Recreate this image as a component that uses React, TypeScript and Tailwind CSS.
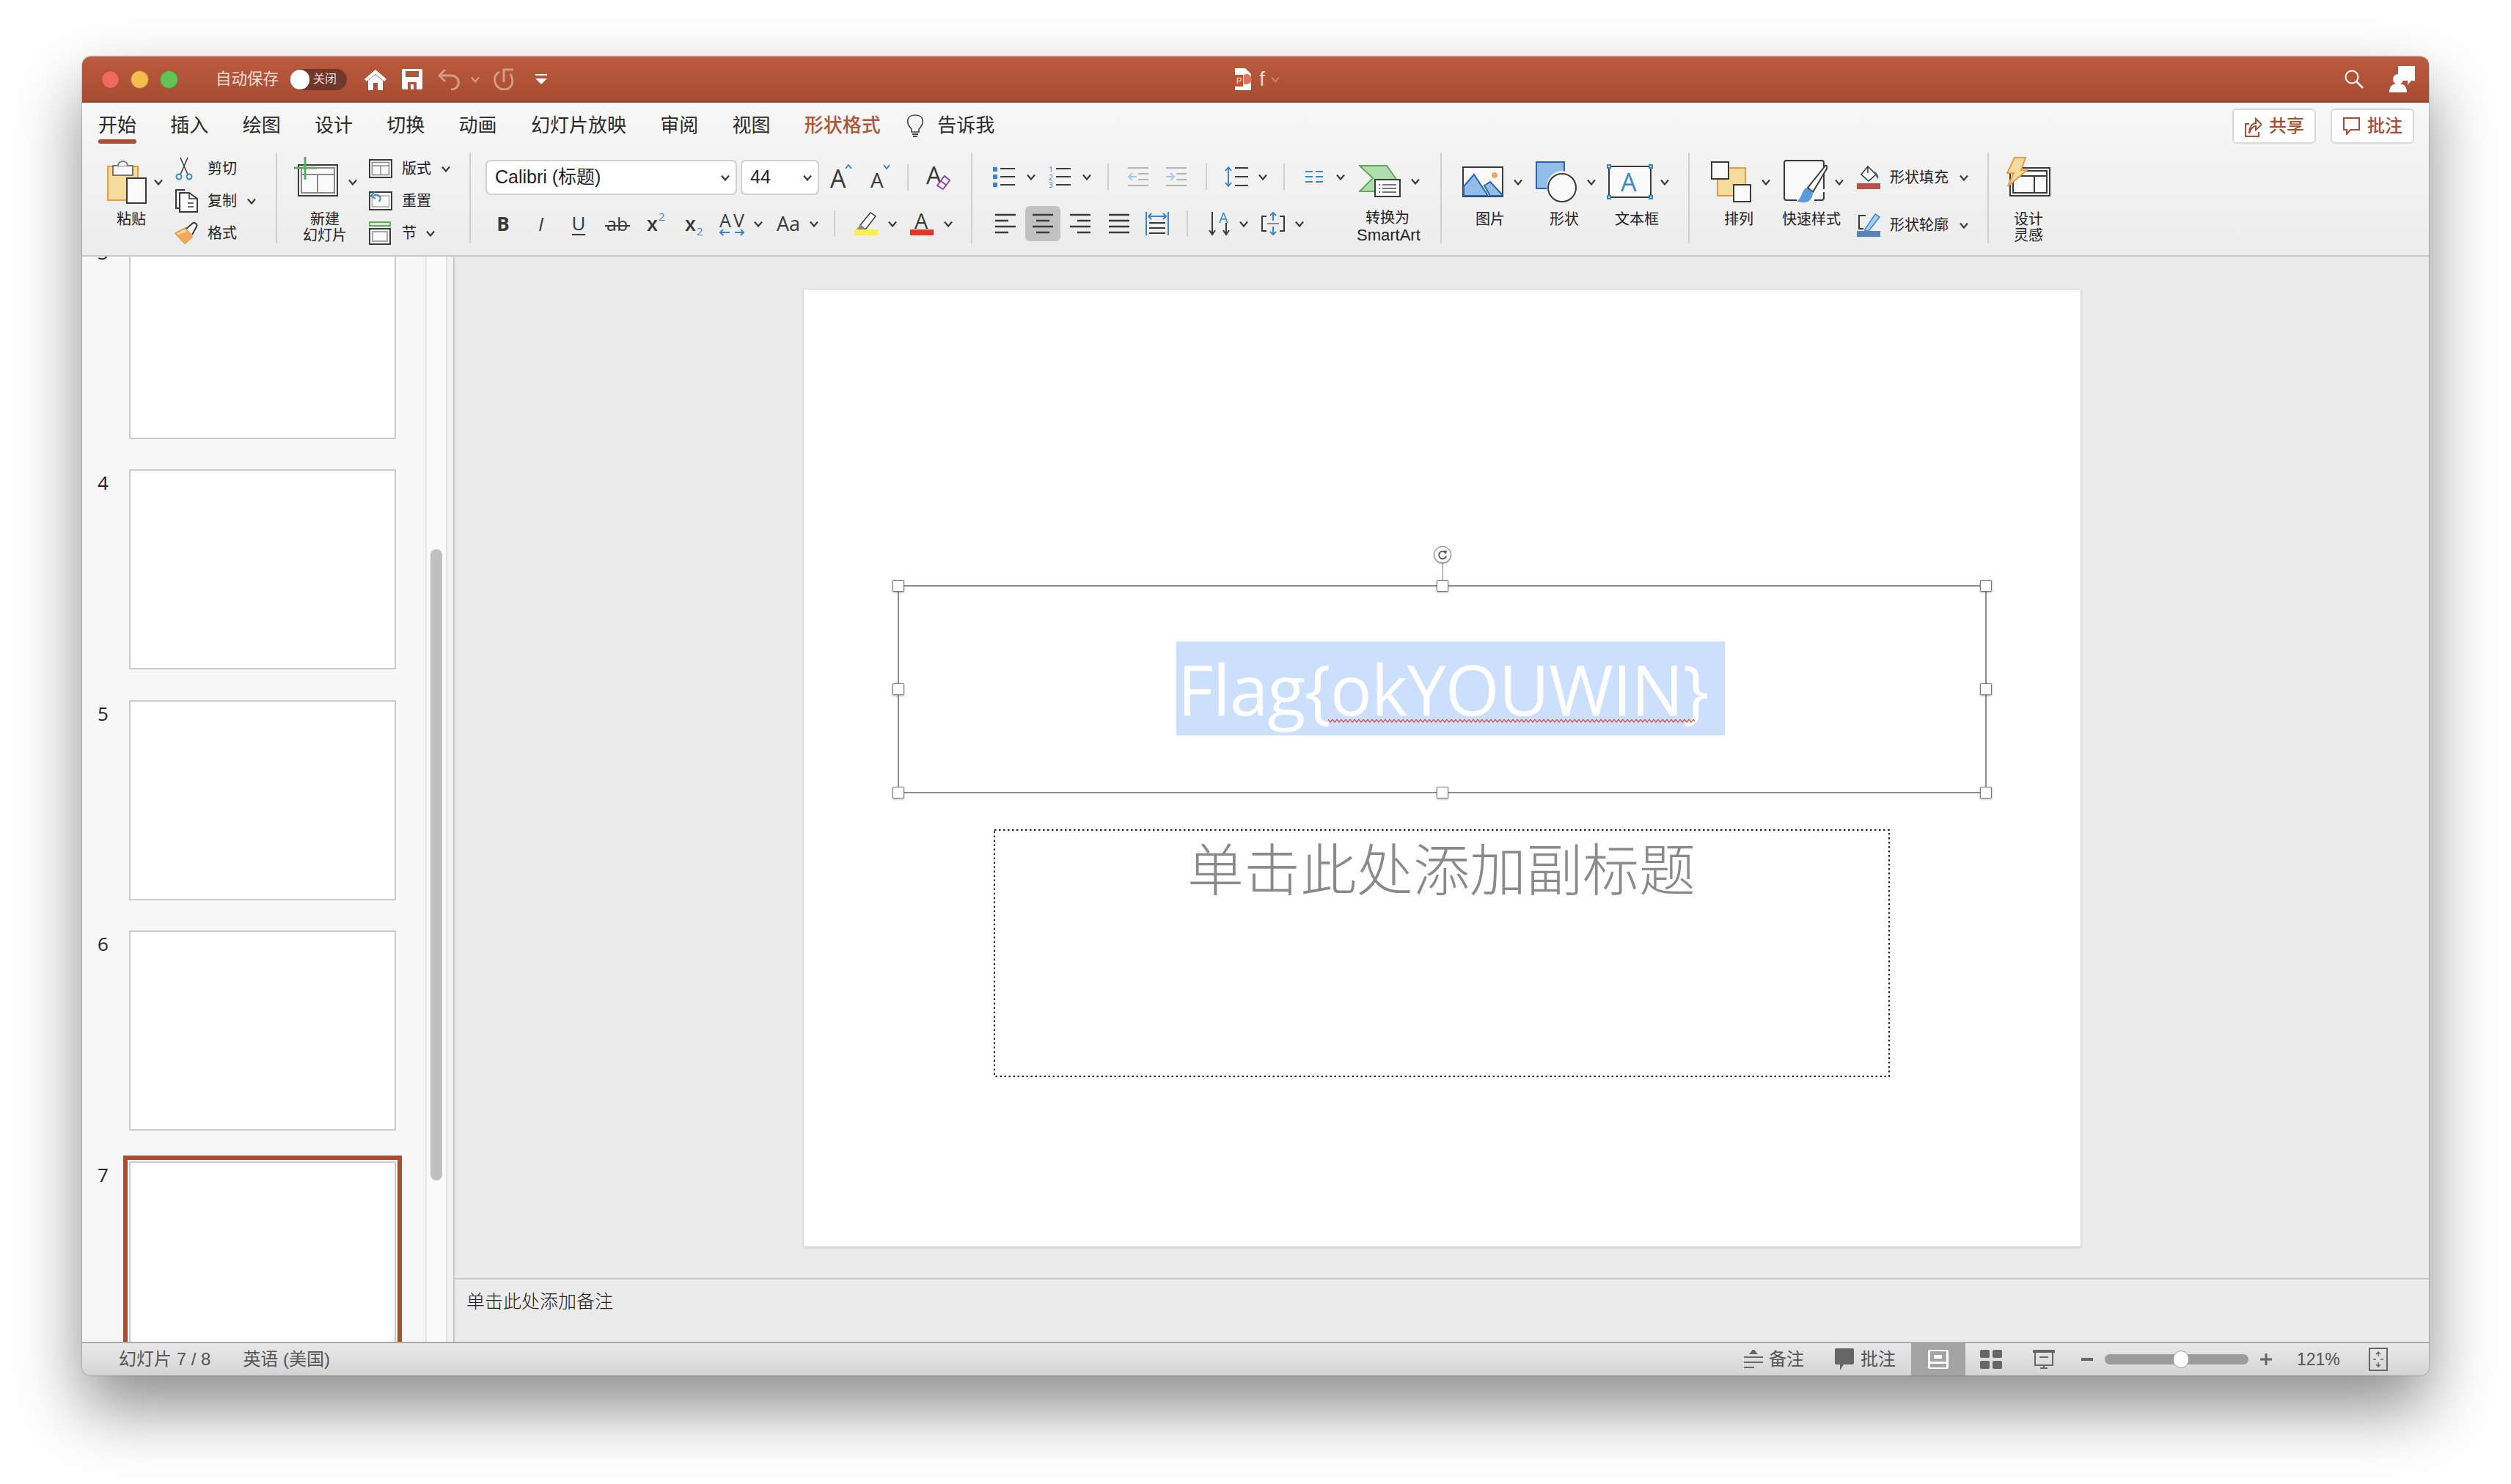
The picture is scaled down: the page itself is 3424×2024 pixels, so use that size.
import React from "react";

const D = "#3a3a3a";
const B = "#3b86c8";
const LB = "#93bde8";
const O = "#e8994a";
const Y = "#f5dc9c";
const W = "#fafafa";

function Chev({ className = "", color = "#3c3c3c" }: { className?: string; color?: string }) {
  return (
    <svg viewBox="0 0 12 9" className={"w-[12px] h-[9px] shrink-0 " + className}>
      <path d="M1 1.5 L6 7.5 L11 1.5" fill="none" stroke={color} strokeWidth="2.2" />
    </svg>
  );
}

function Paste() {
  return (
    <svg viewBox="0 0 54 60" className="w-[54px] h-[60px] shrink-0">
      <rect x="1" y="9" width="41" height="46" fill={Y} stroke={O} strokeWidth="2" />
      <rect x="8" y="8" width="27" height="13" fill={W} stroke="#777" strokeWidth="2" />
      <path d="M15 8 C15 0 28 0 28 8" fill={W} stroke="#777" strokeWidth="2" />
      <rect x="27" y="25" width="26" height="34" fill={W} stroke={D} strokeWidth="2" />
    </svg>
  );
}
function Scissors() {
  return (
    <svg viewBox="0 0 26 32" className="w-[26px] h-[32px] shrink-0">
      <path d="M8 1 L18 24 M18 1 L8 24" stroke={D} strokeWidth="1.5" fill="none" />
      <circle cx="6" cy="27" r="3.5" fill="none" stroke={B} strokeWidth="2" />
      <circle cx="20" cy="27" r="3.5" fill="none" stroke={B} strokeWidth="2" />
    </svg>
  );
}
function Copy() {
  return (
    <svg viewBox="0 0 32 32" className="w-[32px] h-[32px] shrink-0">
      <path d="M10 26 H2 V1 H14" fill="none" stroke={D} strokeWidth="2" />
      <path d="M7 5 H20 L31 13 V31 H7 Z" fill={W} stroke={D} strokeWidth="2" />
      <path d="M20 5 V13 H31 M18 19 H26 M18 24 H26" fill="none" stroke={D} strokeWidth="1.5" />
    </svg>
  );
}
function Format() {
  return (
    <svg viewBox="0 0 32 30" className="w-[32px] h-[30px] shrink-0">
      <path d="M1 15 L14 29 L24 20 L15 8 Z" fill={Y} stroke={O} strokeWidth="2" />
      <path d="M3 18 L17 13 L24 20 L14 29 Z" fill="#f0a860" />
      <path d="M16 9 L24 2 C27 -1 32 3 30 6 L24 17" fill={W} stroke={D} strokeWidth="2" />
    </svg>
  );
}
function NewSlide() {
  return (
    <svg viewBox="0 0 60 54" className="w-[60px] h-[54px] shrink-0 -mt-[14px]">
      <rect x="6" y="11" width="53" height="42" fill={W} stroke={D} strokeWidth="2" />
      <rect x="10" y="15" width="45" height="34" fill="none" stroke="#8a8a8a" strokeWidth="2" />
      <path d="M10 24 H55 M32 24 V49" stroke="#8a8a8a" strokeWidth="2" />
      <path d="M15 0 V31 M0 15 H31" stroke="#5cac5f" strokeWidth="3" />
    </svg>
  );
}
function LayoutIcon() {
  return (
    <svg viewBox="0 0 32 26" className="w-[32px] h-[26px] shrink-0">
      <rect x="1" y="1" width="30" height="24" fill={W} stroke={D} strokeWidth="2" />
      <rect x="4.5" y="4.5" width="23" height="17" fill="none" stroke="#8a8a8a" strokeWidth="1.5" />
      <path d="M4.5 9 H27.5 M16 9 V21" stroke="#8a8a8a" strokeWidth="1.5" />
    </svg>
  );
}
function ResetIcon() {
  return (
    <svg viewBox="0 0 32 26" className="w-[32px] h-[26px] shrink-0">
      <rect x="1" y="1" width="30" height="24" fill={W} stroke={D} strokeWidth="2" />
      <rect x="4.5" y="6" width="23" height="15" fill="none" stroke="#aaa" strokeWidth="1.5" />
      <path d="M14 14 C18 8 14 4 7 5 M8 1 L3 6 L9 10" fill="none" stroke={B} strokeWidth="2" />
    </svg>
  );
}
function SectionIcon() {
  return (
    <svg viewBox="0 0 30 32" className="w-[30px] h-[32px] shrink-0">
      <rect x="1" y="1" width="28" height="5" fill="#d9ebd9" stroke="#5cac5f" strokeWidth="2" />
      <rect x="1" y="10" width="28" height="21" fill={W} stroke={D} strokeWidth="2" />
      <rect x="5" y="14" width="20" height="13" fill="none" stroke="#8a8a8a" strokeWidth="1.5" />
    </svg>
  );
}
function ALetter({ size = 36, w = 30, h = 40, caret }: { size?: number; w?: number; h?: number; caret?: "up" | "down" }) {
  return (
    <svg viewBox={`0 0 ${w} ${h}`} className="shrink-0 overflow-visible" width={w} height={h}>
      <text x="0" y={h - 6} fontSize={size} fontFamily="Open Sans" fill={D}>A</text>
      {caret === "up" && <path d={`M${w - 9} 8 L${w - 5} 3 L${w - 1} 8`} fill="none" stroke={B} strokeWidth="2" />}
      {caret === "down" && <path d={`M${w - 9} 3 L${w - 5} 8 L${w - 1} 3`} fill="none" stroke={B} strokeWidth="2" />}
    </svg>
  );
}
function ClearA() {
  return (
    <svg viewBox="0 0 34 34" className="w-[34px] h-[34px] shrink-0 overflow-visible">
      <text x="0" y="26" fontSize="33" fontFamily="Open Sans" fill={D}>A</text>
      <path d="M15 28 L25 15 L32 21 L23 33 Z" fill={W} stroke="#8f46b0" strokeWidth="2" />
      <path d="M20 22 L27 27" stroke="#8f46b0" strokeWidth="2" />
    </svg>
  );
}
function Strike() {
  return (
    <svg viewBox="0 0 34 28" className="w-[34px] h-[28px] overflow-visible">
      <text x="2" y="24" fontSize="25" fontFamily="Open Sans" fill={D}>ab</text>
      <path d="M0 17 H34" stroke={D} strokeWidth="2" />
    </svg>
  );
}
function Super({ sub }: { sub?: boolean }) {
  return (
    <svg viewBox="0 0 30 34" className="w-[30px] h-[34px] overflow-visible">
      <text x="2" y="27" fontSize="27" fontWeight="600" fontFamily="Open Sans" fill={D}>x</text>
      <text x="18" y={sub ? 33 : 13} fontSize="15" fontFamily="Open Sans" fill={B}>2</text>
    </svg>
  );
}
function Spacing() {
  return (
    <svg viewBox="0 0 34 32" className="w-[34px] h-[32px] overflow-visible">
      <text x="0" y="21" fontSize="25" fontFamily="Open Sans" fill={D} textLength="34">AV</text>
      <path d="M1 28 H14 M5 24 L1 28 L5 32 M21 28 H33 M29 24 L33 28 L29 32" fill="none" stroke={B} strokeWidth="2" />
    </svg>
  );
}
function Highlight() {
  return (
    <svg viewBox="0 0 32 32" className="w-[32px] h-[32px]">
      <path d="M8 18 L22 1 L29 6 L15 24 Z" fill={W} stroke={D} strokeWidth="1.5" />
      <path d="M3 24 L8 17 L15 24 Z" fill="#8a8a8a" />
      <rect x="0" y="24" width="32" height="8" fill="#f8f14a" />
    </svg>
  );
}
function FontColor() {
  return (
    <svg viewBox="0 0 32 32" className="w-[32px] h-[32px] overflow-visible">
      <text x="6" y="23" fontSize="29" fontFamily="Open Sans" fill={D}>A</text>
      <rect x="0" y="24" width="32" height="8" fill="#e93323" />
    </svg>
  );
}
function Bullets({ numbered }: { numbered?: boolean }) {
  return (
    <svg viewBox="0 0 30 30" className="w-[30px] h-[30px] shrink-0 overflow-visible">
      {numbered ? (
        <>
          <text x="0" y="9" fontSize="10" fontFamily="Open Sans" fill={B}>1</text>
          <text x="0" y="20" fontSize="10" fontFamily="Open Sans" fill={B}>2</text>
          <text x="0" y="30" fontSize="10" fontFamily="Open Sans" fill={B}>3</text>
        </>
      ) : (
        <>
          <rect x="0" y="2" width="6" height="6" fill={B} />
          <rect x="0" y="12" width="6" height="6" fill={B} />
          <rect x="0" y="23" width="6" height="6" fill={B} />
        </>
      )}
      <path d="M10 4 H30 M10 15 H30 M10 26 H30" stroke={D} strokeWidth="2" />
    </svg>
  );
}
function Indent({ right }: { right?: boolean }) {
  return (
    <svg viewBox="0 0 28 28" className="w-[28px] h-[28px] shrink-0">
      <path d="M0 2 H28 M14 10 H28 M14 18 H28 M0 26 H28" stroke="#b5b5b5" strokeWidth="2" />
      {right ? (
        <path d="M0 14 H11 M6 9 L11 14 L6 19" fill="none" stroke="#a9c9e8" strokeWidth="2" />
      ) : (
        <path d="M12 14 H1 M6 9 L1 14 L6 19" fill="none" stroke="#a9c9e8" strokeWidth="2" />
      )}
    </svg>
  );
}
function LineSpace() {
  return (
    <svg viewBox="0 0 32 30" className="w-[32px] h-[30px] shrink-0">
      <path d="M5 2 V28 M1 7 L5 2 L9 7 M1 23 L5 28 L9 23" fill="none" stroke={B} strokeWidth="2" />
      <path d="M14 3 H32 M14 15 H32 M14 27 H32" stroke={D} strokeWidth="2" />
    </svg>
  );
}
function Columns() {
  return (
    <svg viewBox="0 0 24 16" className="w-[24px] h-[16px] shrink-0">
      <path d="M0 1 H10 M14 1 H24 M0 8 H10 M14 8 H24 M0 15 H10 M14 15 H24" stroke={B} strokeWidth="2" />
    </svg>
  );
}
function SmartArtIcon() {
  return (
    <svg viewBox="0 0 57 44" className="w-[57px] h-[44px] shrink-0">
      <path d="M1 1 H38 L54 24 L38 36 H1 L19 18 Z" fill="#b0dcae" stroke="#5cac5f" strokeWidth="2" />
      <rect x="22" y="20" width="34" height="23" fill={W} stroke={D} strokeWidth="2" />
      <path d="M27 27 H29 M32 27 H51 M27 32 H29 M32 32 H51 M27 37 H29 M32 37 H51" stroke="#777" strokeWidth="2" />
    </svg>
  );
}
function AlignLines({ kind, color = D }: { kind: "l" | "c" | "r" | "j"; color?: string }) {
  const d =
    kind === "l"
      ? "M0 2 H28 M0 10 H18 M0 18 H28 M0 26 H18"
      : kind === "c"
      ? "M0 2 H28 M5 10 H23 M0 18 H28 M5 26 H23"
      : kind === "r"
      ? "M0 2 H28 M10 10 H28 M0 18 H28 M10 26 H28"
      : "M0 2 H28 M0 10 H28 M0 18 H28 M0 26 H28";
  return (
    <svg viewBox="0 0 28 28" className="w-[28px] h-[28px] shrink-0">
      <path d={d} stroke={color} strokeWidth="2.4" />
    </svg>
  );
}
function Distributed() {
  return (
    <svg viewBox="0 0 32 32" className="w-[32px] h-[32px] shrink-0">
      <path d="M1 0 V32 M31 0 V32" stroke={B} strokeWidth="2" />
      <path d="M4 6 H28 M8 2 L4 6 L8 10 M24 2 L28 6 L24 10" fill="none" stroke={B} strokeWidth="2" />
      <path d="M5 15 H27 M5 22 H27 M5 29 H27" stroke={D} strokeWidth="2" />
    </svg>
  );
}
function TextDir() {
  return (
    <svg viewBox="0 0 30 32" className="w-[30px] h-[32px] shrink-0 overflow-visible">
      <path d="M5 0 V30 M1 25 L5 31 L9 25" fill="none" stroke={D} strokeWidth="2" />
      <path d="M24 15 V30 M20 25 L24 31 L28 25" fill="none" stroke={D} strokeWidth="2" />
      <text x="14" y="15" fontSize="20" fontFamily="Open Sans" fill={B}>A</text>
    </svg>
  );
}
function AlignText() {
  return (
    <svg viewBox="0 0 32 32" className="w-[32px] h-[32px] shrink-0">
      <path d="M7 6 H1 V26 H7 M25 6 H31 V26 H25" fill="none" stroke={D} strokeWidth="2" />
      <path d="M16 1 V12 M12 5 L16 1 L20 5 M16 20 V31 M12 27 L16 31 L20 27" fill="none" stroke={B} strokeWidth="2" />
      <path d="M8 16 H24" stroke="#8a8a8a" strokeWidth="2" />
    </svg>
  );
}
function Picture() {
  return (
    <svg viewBox="0 0 56 42" className="w-[56px] h-[42px] shrink-0">
      <rect x="1" y="1" width="54" height="40" fill={W} stroke={D} strokeWidth="2" />
      <path d="M2 27 L16 11 L35 40 H2 Z" fill={LB} stroke="#2a66ad" strokeWidth="2" />
      <path d="M30 26 L38 21 L54 38 V40 H38 Z" fill={LB} stroke="#2a66ad" strokeWidth="2" />
      <ellipse cx="44" cy="12" rx="4" ry="4" fill="#f0a860" />
    </svg>
  );
}
function Shape() {
  return (
    <svg viewBox="0 0 56 56" className="w-[56px] h-[56px] shrink-0">
      <rect x="1" y="1" width="38" height="36" fill={LB} stroke="#2a66ad" strokeWidth="2" />
      <ellipse cx="36" cy="35" rx="21" ry="22" fill="#f3f3f3" />
      <ellipse cx="36" cy="36" rx="19" ry="19" fill={W} stroke={D} strokeWidth="2" />
    </svg>
  );
}
function TextBox() {
  return (
    <svg viewBox="0 0 63 48" className="w-[63px] h-[48px] shrink-0 overflow-visible">
      <rect x="3" y="3" width="57" height="42" fill={W} stroke={D} strokeWidth="2" />
      <text x="19" y="37" fontSize="34" fontFamily="Open Sans" fill={B}>A</text>
      {[[0, 0], [57, 0], [0, 42], [57, 42]].map(([x, y], i) => (
        <rect key={i} x={x + 1} y={y + 1} width="4" height="4" fill="#fff" stroke={B} strokeWidth="2" />
      ))}
    </svg>
  );
}
function Arrange() {
  return (
    <svg viewBox="0 0 55 56" className="w-[55px] h-[56px] shrink-0">
      <rect x="9" y="9" width="38" height="38" fill={Y} stroke={O} strokeWidth="2" />
      <rect x="1" y="1" width="23" height="23" fill={W} stroke={D} strokeWidth="2" />
      <rect x="31" y="32" width="23" height="23" fill={W} stroke={D} strokeWidth="2" />
    </svg>
  );
}
function QuickStyle() {
  return (
    <svg viewBox="0 0 60 60" className="w-[60px] h-[60px] shrink-0">
      <path d="M1 4 H55 V45 L40 55 H1 Z" fill={W} />
      <path d="M18 55 H4 Q1 55 1 52 V4 Q1 1 4 1 H52 Q55 1 55 4 V40 M55 44 V52 Q55 55 52 55 H42" fill="none" stroke={D} strokeWidth="2" />
      <path d="M33 38 L57 8 Q60 7 59 12 L40 44 Z" fill={W} stroke={D} strokeWidth="2" />
      <path d="M31 38 C24 42 26 52 18 56 C28 61 40 58 40 44 Z" fill="#5c9bd8" />
    </svg>
  );
}
function Fill() {
  return (
    <svg viewBox="0 0 32 32" className="w-[32px] h-[32px] shrink-0">
      <path d="M15 1 L26 12 L16 21 L6 12 Z M15 1 V10" fill={W} stroke={D} strokeWidth="1.6" />
      <path d="M24 8 C28 10 30 14 29 18 C26 16 25 12 24 8 Z" fill="#2a66ad" />
      <rect x="0" y="24" width="32" height="8" fill="#b7504a" />
    </svg>
  );
}
function Outline() {
  return (
    <svg viewBox="0 0 32 32" className="w-[32px] h-[32px] shrink-0">
      <path d="M12 3 H3 V21 H9" fill="none" stroke={D} strokeWidth="2" />
      <path d="M11 22 L25 1 L31 5 L16 24 L11 24 Z" fill="#a9cdf0" stroke={B} strokeWidth="1.5" />
      <rect x="0" y="24" width="32" height="8" fill="#5a82bd" />
    </svg>
  );
}
function Design() {
  return (
    <svg viewBox="0 0 60 54" className="w-[60px] h-[54px] shrink-0 -mt-[14px]">
      <rect x="5" y="15" width="54" height="38" fill={W} stroke={D} strokeWidth="2" />
      <rect x="9" y="19" width="46" height="30" fill="none" stroke={D} strokeWidth="2" />
      <path d="M9 26 H55 M38 26 V49" stroke={D} strokeWidth="2" />
      <path d="M11 1 H26 L20 18 H28 L2 40 L10 22 H1 Z" fill={Y} stroke={O} strokeWidth="2" />
    </svg>
  );
}

function Large({
  col,
  row,
  icon,
  chev,
  lines,
}: {
  col: string;
  row?: string;
  icon: React.ReactNode;
  chev?: string;
  lines: string[];
}) {
  return (
    <div className={"flex flex-col shrink-0 " + col}>
      <div className={"flex items-center h-[80px] " + (row ?? "")}>
        {icon}
        {chev && <Chev className={chev} />}
      </div>
      {lines.map((l) => (
        <div
          key={l}
          className={
            "leading-[22px] text-center whitespace-nowrap text-[#222] " + (l === "SmartArt" ? "text-[22px] mt-[2px] -ml-[2px]" : "text-[20px]")
          }
        >
          {l}
        </div>
      ))}
    </div>
  );
}
function Small({ icon, label, chev, box = "w-[45px]", cls = "" }: { icon: React.ReactNode; label: string; chev?: string; box?: string; cls?: string }) {
  return (
    <div className={"flex items-center h-[44px] shrink-0 whitespace-nowrap " + cls}>
      <div className={"shrink-0 flex items-center " + box}>{icon}</div>
      <span className="text-[20px] text-[#222]">{label}</span>
      {chev && <Chev className={chev} />}
    </div>
  );
}
function Cell({ cls, children }: { cls: string; children?: React.ReactNode }) {
  return <div className={"flex items-center justify-center shrink-0 h-[48px] " + cls}>{children}</div>;
}
function Sep({ cls }: { cls: string }) {
  return <div className={"w-[2px] h-[36px] bg-[#cfcfcf] shrink-0 " + cls} />;
}

const tabs = ["开始", "插入", "绘图", "设计", "切换", "动画", "幻灯片放映", "审阅", "视图"];

function Handle({ cls }: { cls: string }) {
  return (
    <div className={"absolute w-[16px] h-[16px] bg-white border border-[#777] rounded-[1px] shadow-[0_1px_3px_rgba(0,0,0,0.35)] " + cls} />
  );
}

function Thumb({ n, active }: { n: number; active?: boolean }) {
  return (
    <div className="flex h-[314.4px] shrink-0 pl-[21px]">
      <div className="w-[43px] text-[26px] leading-[36px] text-[#222] font-['Open_Sans',sans-serif]">{n}</div>
      <div
        className={
          "w-[364px] h-[273px] bg-white border-2 border-[#cbcbcb] " +
          (active ? "shadow-[0_0_0_2px_#ffffff,0_0_0_8px_#a94e33]" : "")
        }
      />
    </div>
  );
}

export default function App() {
  return (
    <div className="w-[3424px] h-[2024px] bg-white pt-[77px] pl-[112px] overflow-hidden font-['Liberation_Sans','Noto_Sans_CJK_SC',sans-serif]">
      <div className="w-[3200px] h-[1799px] flex flex-col rounded-[12px] overflow-hidden bg-[#ebebeb] shadow-[0_44px_90px_rgba(0,0,0,0.45),0_0_2px_rgba(0,0,0,0.5)]">
        {/* Title bar */}
        <div className="h-[63px] shrink-0 flex items-center bg-gradient-to-b from-[#bc5b3f] to-[#a64c32] border-b-2 border-[#963f28] pt-[1px]">
          <div className="flex-1 flex items-center">
            <div className="w-[25px] h-[25px] rounded-full bg-[#ee6a5f] border border-[#a8442f] ml-[26px]" />
            <div className="w-[25px] h-[25px] rounded-full bg-[#f5bd4f] border border-[#a8762f] ml-[15px]" />
            <div className="w-[25px] h-[25px] rounded-full bg-[#61c454] border border-[#5a8a35] ml-[15px]" />
            <span className="ml-[51px] text-[21.5px] text-[#f3dcd4] whitespace-nowrap">自动保存</span>
            <div className="ml-[16px] w-[77px] h-[29px] rounded-full bg-[#71382a] flex items-center shrink-0">
              <div className="w-[26px] h-[27px] rounded-full bg-white shrink-0" />
              <span className="ml-[5px] text-[16px] text-[#f3dcd4] whitespace-nowrap">关闭</span>
            </div>
            <svg viewBox="0 0 32 30" className="w-[32px] h-[30px] ml-[23px] shrink-0">
              <path d="M16 3 L30 15 L28 17 L16 7 L4 17 L2 15 Z" fill="#fff" stroke="#fff" strokeWidth="1.5" />
              <path d="M6 17 L16 9 L26 17 V30 H19 V20 H13 V30 H6 Z" fill="#fff" />
            </svg>
            <svg viewBox="0 0 28 28" className="w-[28px] h-[28px] ml-[20px] shrink-0">
              <path d="M2 0 H26 Q28 0 28 2 V26 Q28 28 26 28 H2 Q0 28 0 26 V2 Q0 0 2 0 Z" fill="#fff" />
              <rect x="5" y="3" width="18" height="8" fill="#b0553a" />
              <rect x="8" y="18" width="12" height="10" fill="#b0553a" />
              <rect x="12" y="21" width="4" height="7" fill="#fff" />
            </svg>
            <svg viewBox="0 0 31 30" className="w-[31px] h-[30px] ml-[21px] shrink-0">
              <path d="M10 2 L2 10 L10 18 M2 10 H18 C32 10 32 29 18 29" fill="none" stroke="#d69a85" strokeWidth="3" />
            </svg>
            <Chev className="ml-[14px]" color="#d69a85" />
            <svg viewBox="0 0 30 30" className="w-[30px] h-[30px] ml-[18px] shrink-0">
              <path d="M9 5 C-2 10 2 29 15 29 C26 29 30 18 24 8 M15 19 V2 H28" fill="none" stroke="#d69a85" strokeWidth="3" />
            </svg>
            <svg viewBox="0 0 16 14" className="w-[16px] h-[14px] ml-[28px] shrink-0">
              <rect x="0" y="0" width="16" height="2" fill="#fff" />
              <path d="M0 6 H16 L8 14 Z" fill="#fff" />
            </svg>
          </div>
          <div className="flex items-center shrink-0 pl-[24px]">
            <svg viewBox="0 0 22 30" className="w-[22px] h-[30px] overflow-visible">
              <path d="M0 0 H14 L22 8 V30 H0 Z" fill="#fff" />
              <rect x="0" y="9" width="11" height="16" fill="#c8502e" />
              <path d="M12 9 A7 7 0 1 1 12 21 Z" fill="#e0735a" />
              <text x="2" y="21" fontSize="11" fontFamily="Liberation Sans" fill="#fff">P</text>
            </svg>
            <span className="ml-[11px] text-[27px] leading-[30px] text-[#f3dcd4]">f</span>
            <Chev className="ml-[8px]" color="#c98068" />
          </div>
          <div className="flex-1 flex items-center justify-end pr-[19px]">
            <svg viewBox="0 0 26 26" className="w-[26px] h-[26px]">
              <circle cx="10" cy="10" r="8.5" fill="none" stroke="#fff" strokeWidth="2" />
              <path d="M16 16 L25 25" stroke="#fff" strokeWidth="2.5" />
            </svg>
            <svg viewBox="0 0 35 36" className="w-[35px] h-[36px] ml-[35px]">
              <path d="M12 0 H35 V20 H30 L25 26 V20 H12 Z" fill="#fff" />
              <circle cx="12" cy="18" r="7" fill="#fff" />
              <path d="M0 36 C0 26 6 24 12 24 C18 24 24 26 24 36 Z" fill="#fff" />
            </svg>
          </div>
        </div>

        {/* Ribbon */}
        <div className="h-[210px] shrink-0 flex flex-col bg-gradient-to-b from-[#f7f7f7] to-[#ececec] border-b-2 border-[#c9c9c9]">
          <div className="h-[68px] shrink-0 flex items-start">
            <div className="flex items-start pl-[22px] gap-[46.3px] pt-[15px] text-[26px] leading-[32px] text-[#2a2a2a]">
              {tabs.map((t, i) => (
                <div key={t} className="flex flex-col whitespace-nowrap">
                  <span>{t}</span>
                  {i === 0 && <div className="h-[6px] mt-[3px] rounded-full bg-[#a94e33]" />}
                </div>
              ))}
              <span className="text-[#b0553a] font-medium whitespace-nowrap">形状格式</span>
              <div className="flex items-center -ml-[11px] whitespace-nowrap">
                <svg viewBox="0 0 24 32" className="w-[24px] h-[32px] shrink-0">
                  <path d="M7 21 C2 16 1 12 2 8 C4 0 20 0 22 8 C23 12 22 16 17 21 V25 H7 Z" fill="none" stroke="#444" strokeWidth="1.6" />
                  <path d="M8 28 H16 M9 31 H15" stroke="#444" strokeWidth="2" />
                </svg>
                <span className="ml-[18px]">告诉我</span>
              </div>
            </div>
            <div className="ml-auto flex pt-[8px] pr-[20px] gap-[20px]">
              <div className="w-[114px] h-[48px] bg-white border-2 border-[#d8d8d8] rounded-[6px] flex items-center justify-center text-[#a94e33] text-[24px] font-medium">
                <svg viewBox="0 0 24 32" className="w-[24px] h-[32px] mr-[10px]">
                  <path d="M7 13 H2 V30 H20 V24" fill="none" stroke="#a94e33" strokeWidth="2" />
                  <path d="M7 26 C7 16 12 12 16 12 V6 L24 14 L16 21 V16 C12 16 9 20 7 26 Z" fill="none" stroke="#a94e33" strokeWidth="2" />
                </svg>
                共享
              </div>
              <div className="w-[114px] h-[48px] bg-white border-2 border-[#d8d8d8] rounded-[6px] flex items-center justify-center text-[#a94e33] text-[24px] font-medium">
                <svg viewBox="0 0 24 24" className="w-[24px] h-[24px] mr-[10px]">
                  <path d="M2 1 H23 V17 H11 L6 23 V17 H2 Z" fill="none" stroke="#a94e33" strokeWidth="2" />
                </svg>
                批注
              </div>
            </div>
          </div>

          <div className="h-[124px] shrink-0 flex">
            {/* Clipboard */}
            <div className="w-[266px] shrink-0 flex border-r-2 border-[#cfcfcf]">
              <Large col="w-[78px] ml-[28px]" row="pl-[6px]" icon={<Paste />} chev="ml-[10px]" lines={["粘贴"]} />
              <div className="ml-[20px] flex flex-col w-[120px] shrink-0">
                <Small icon={<Scissors />} label="剪切" />
                <Small icon={<Copy />} label="复制" chev="ml-[14px]" />
                <Small icon={<Format />} label="格式" />
              </div>
            </div>
            {/* Slides */}
            <div className="w-[264px] shrink-0 flex border-r-2 border-[#cfcfcf]">
              <Large col="w-[80px] ml-[25px]" row="-ml-[2px]" icon={<NewSlide />} chev="ml-[14px]" lines={["新建", "幻灯片"]} />
              <div className="ml-[20px] flex flex-col w-[120px] shrink-0">
                <Small icon={<LayoutIcon />} label="版式" chev="ml-[14px]" />
                <Small icon={<ResetIcon />} label="重置" />
                <Small icon={<SectionIcon />} label="节" chev="ml-[13px]" />
              </div>
            </div>
            {/* Font */}
            <div className="w-[684px] shrink-0 flex flex-col pt-[10px] border-r-2 border-[#cfcfcf]">
              <div className="flex items-center h-[48px]">
                <div className="ml-[20px] w-[343px] h-[48px] bg-white border-2 border-[#d0d0d0] rounded-[7px] flex items-center pl-[11px] pr-[8px] text-[25px] text-[#222] shrink-0">
                  <span className="whitespace-nowrap">Calibri (标题)</span>
                  <Chev className="ml-auto" />
                </div>
                <div className="ml-[5px] w-[107px] h-[48px] bg-white border-2 border-[#d0d0d0] rounded-[7px] flex items-center pl-[11px] pr-[8px] text-[25px] text-[#222] shrink-0">
                  <span>44</span>
                  <Chev className="ml-auto" />
                </div>
                <div className="ml-[15px] shrink-0"><ALetter w={30} caret="up" size={34} /></div>
                <div className="ml-[25px] shrink-0"><ALetter w={27} caret="down" size={28} /></div>
                <Sep cls="ml-[23px]" />
                <div className="ml-[24px] shrink-0"><ClearA /></div>
              </div>
              <div className="flex items-center h-[48px] mt-[15px] ml-[18px] text-[#3a3a3a] font-['Open_Sans',sans-serif]">
                <Cell cls="w-[52px] text-[26px] font-bold">B</Cell>
                <Cell cls="w-[51px] text-[26px] italic">I</Cell>
                <Cell cls="w-[52px] text-[26px]"><span className="border-b-2 border-[#3a3a3a] leading-[30px]">U</span></Cell>
                <Cell cls="w-[53px]"><Strike /></Cell>
                <Cell cls="w-[53px]"><Super /></Cell>
                <Cell cls="w-[51px]"><Super sub /></Cell>
                <Cell cls="w-[52px]"><Spacing /></Cell>
                <Cell cls="w-[20px]"><Chev /></Cell>
                <Cell cls="w-[62px] text-[27px]">Aa</Cell>
                <Cell cls="w-[8px]"><Chev /></Cell>
                <Sep cls="ml-[23px]" />
                <Cell cls="w-[32px] ml-[26px]"><Highlight /></Cell>
                <Cell cls="w-[12px] ml-[14px]"><Chev /></Cell>
                <Cell cls="w-[32px] ml-[18px]"><FontColor /></Cell>
                <Cell cls="w-[12px] ml-[14px]"><Chev /></Cell>
              </div>
            </div>
            {/* Paragraph */}
            <div className="w-[640px] shrink-0 flex border-r-2 border-[#cfcfcf]">
              <div className="w-[520px] shrink-0 flex flex-col pt-[9px]">
                <div className="flex items-center h-[48px]">
                  <div className="ml-[28px]"><Bullets /></div>
                  <Chev className="ml-[16px]" />
                  <div className="ml-[18px]"><Bullets numbered /></div>
                  <Chev className="ml-[16px]" />
                  <Sep cls="ml-[22px]" />
                  <div className="ml-[26px]"><Indent /></div>
                  <div className="ml-[24px]"><Indent right /></div>
                  <Sep cls="ml-[26px]" />
                  <div className="ml-[24px]"><LineSpace /></div>
                  <Chev className="ml-[14px]" />
                  <Sep cls="ml-[22px]" />
                  <div className="ml-[28px]"><Columns /></div>
                  <Chev className="ml-[18px]" />
                </div>
                <div className="flex items-center h-[48px] mt-[16px]">
                  <div className="ml-[31px] w-[27px]"><AlignLines kind="l" /></div>
                  <div className="ml-[14px] w-[48px] h-[48px] rounded-[6px] bg-[#c1c1c1] flex items-center justify-center shrink-0"><AlignLines kind="c" /></div>
                  <div className="ml-[13px] w-[29px]"><AlignLines kind="r" /></div>
                  <div className="ml-[24px] w-[28px]"><AlignLines kind="j" /></div>
                  <div className="ml-[22px]"><Distributed /></div>
                  <Sep cls="ml-[24px]" />
                  <div className="ml-[28px]"><TextDir /></div>
                  <Chev className="ml-[12px]" />
                  <div className="ml-[18px]"><AlignText /></div>
                  <Chev className="ml-[14px]" />
                </div>
              </div>
              <Large col="w-[80px] ml-[6px]" row="ml-[1px]" icon={<SmartArtIcon />} chev="ml-[14px]" lines={["转换为", "SmartArt"]} />
            </div>
            {/* Insert */}
            <div className="w-[338px] shrink-0 flex border-r-2 border-[#cfcfcf]">
              <Large col="w-[80px] ml-[26px]" row="ml-[2px]" icon={<Picture />} chev="ml-[14px]" lines={["图片"]} />
              <Large col="w-[80px] ml-[21px]" row="ml-[1px]" icon={<Shape />} chev="ml-[14px]" lines={["形状"]} />
              <Large col="w-[80px] ml-[19px]" row="-ml-[1px]" icon={<TextBox />} chev="ml-[10px]" lines={["文本框"]} />
            </div>
            {/* Drawing */}
            <div className="w-[408px] shrink-0 flex border-r-2 border-[#cfcfcf]">
              <Large col="w-[80px] ml-[27px]" row="ml-[2px]" icon={<Arrange />} chev="ml-[14px]" lines={["排列"]} />
              <Large col="w-[80px] ml-[19px]" row="ml-[2px]" icon={<QuickStyle />} chev="ml-[10px]" lines={["快速样式"]} />
              <div className="ml-[22px] flex flex-col pt-[12px] shrink-0">
                <Small icon={<Fill />} label="形状填充" chev="ml-[15px]" />
                <Small icon={<Outline />} label="形状轮廓" chev="ml-[15px]" cls="mt-[21px]" />
              </div>
            </div>
            {/* Designer */}
            <Large col="w-[60px] ml-[24px]" icon={<Design />} lines={["设计", "灵感"]} />
          </div>
        </div>

        {/* Body */}
        <div className="flex-1 min-h-0 flex">
          <div className="w-[470px] shrink-0 bg-[#f7f7f7] border-r-2 border-[#e4e4e4] overflow-hidden">
            <div className="flex flex-col -mt-[24px]">
              <Thumb n={3} />
              <Thumb n={4} />
              <Thumb n={5} />
              <Thumb n={6} />
              <Thumb n={7} active />
            </div>
          </div>
          <div className="w-[28px] shrink-0 bg-[#fafafa] border-r-2 border-[#e4e4e4] pl-[5px]">
            <div className="w-[16px] h-[861px] mt-[399px] rounded-full bg-[#c0c0c0]" />
          </div>
          <div className="w-[10px] shrink-0 bg-[#f1f1f1] border-r-2 border-[#c8c8c8]" />
          <div className="flex-1 min-w-0 flex flex-col">
            <div className="flex-1 min-h-0 pt-[45px]">
              <div className="relative w-[1741px] h-[1305px] mx-auto bg-white shadow-[0_1px_4px_rgba(0,0,0,0.2)]">
                {/* Title placeholder */}
                <div className="absolute left-[128px] top-[403px] w-[1485px] h-[284px] border-2 border-[#8c8c8c]">
                  <div className="absolute left-[378px] top-[75px] w-[748px] h-[128px] bg-[#cce0fd] flex items-center justify-center pr-[20px] text-white text-[95px] leading-[128px] tracking-[-1px] whitespace-nowrap font-['Open_Sans',sans-serif]">
                    Flag{"{"}okYOUWIN{"}"}
                    <svg className="absolute left-[207px] top-[105px] w-[500px] h-[6px]" viewBox="0 0 500 6">
                      <defs>
                        <pattern id="zz" width="6" height="6" patternUnits="userSpaceOnUse">
                          <path d="M0 1 L3 5 L6 1" fill="none" stroke="#e33b2e" strokeWidth="1.2" />
                        </pattern>
                      </defs>
                      <rect width="500" height="6" fill="url(#zz)" />
                    </svg>
                  </div>
                  <Handle cls="-left-[9px] -top-[9px]" />
                  <Handle cls="left-[733px] -top-[9px]" />
                  <Handle cls="-right-[9px] -top-[9px]" />
                  <Handle cls="-left-[9px] top-[132px]" />
                  <Handle cls="-right-[9px] top-[132px]" />
                  <Handle cls="-left-[9px] -bottom-[9px]" />
                  <Handle cls="left-[733px] -bottom-[9px]" />
                  <Handle cls="-right-[9px] -bottom-[9px]" />
                  <div className="absolute left-[741px] -top-[32px] w-[1px] h-[24px] bg-[#777]" />
                  <div className="absolute left-[729px] -top-[55px] w-[24px] h-[23px] rounded-full bg-white border border-[#777] shadow-[0_1px_2px_rgba(0,0,0,0.3)] flex items-center justify-center">
                    <svg viewBox="0 0 14 14" className="w-[14px] h-[14px]">
                      <path d="M10.5 3.5 A5 5 0 1 0 12 8" fill="none" stroke="#555" strokeWidth="1.8" />
                      <path d="M8 1 L13 1 L12 6 Z" fill="#555" />
                    </svg>
                  </div>
                </div>
                {/* Subtitle placeholder */}
                <div className="absolute left-[259px] top-[736px] w-[1222px] h-[338px] pt-[18px] text-center text-[77px] leading-[80px] text-[#8a8a8a] font-light font-['Liberation_Serif','Noto_Sans_CJK_SC',serif]">
                  <svg className="absolute inset-0 w-full h-full" viewBox="0 0 1222 338">
                    <rect x="1" y="1" width="1220" height="336" fill="none" stroke="#222" strokeWidth="2" strokeDasharray="2.5 3.5" />
                  </svg>
                  单击此处添加副标题
                </div>
              </div>
            </div>
            <div className="h-[87px] shrink-0 border-t-2 border-[#c8c8c8] pl-[16px] flex items-center pb-[24px] text-[25px] text-[#222] font-light">
              单击此处添加备注
            </div>
          </div>
        </div>

        {/* Status bar */}
        <div className="h-[46px] shrink-0 relative flex items-center bg-gradient-to-b from-[#e9e9e9] to-[#d4d4d4] border-t-2 border-[#a8a8a8] pl-[50px] pr-[56px] text-[24px] text-[#555] whitespace-nowrap">
          <span>幻灯片 7 / 8</span>
          <span className="ml-[44px]">英语 (美国)</span>
          <div className="ml-auto self-stretch flex items-center">
            <svg viewBox="0 0 26 26" className="w-[26px] h-[26px] shrink-0">
              <path d="M9 5 L13 0 L17 5 Z M0 10 H26 M0 17 H26 M0 24 H14" fill="#666" stroke="#666" strokeWidth="2" />
            </svg>
            <span className="ml-[8px]">备注</span>
            <svg viewBox="0 0 26 30" className="w-[26px] h-[30px] ml-[42px] shrink-0">
              <path d="M2 0 H24 Q26 0 26 2 V20 Q26 22 24 22 H12 L7 30 V22 H2 Q0 22 0 20 V2 Q0 0 2 0 Z" fill="#666" />
            </svg>
            <span className="ml-[9px]">批注</span>
            <div className="ml-[21px] w-[74px] self-stretch bg-[#a3a3a3] flex items-center justify-center shrink-0">
              <svg viewBox="0 0 28 26" className="w-[28px] h-[26px]">
                <rect width="28" height="26" rx="2" fill="#fff" />
                <rect x="3" y="2" width="22" height="14" fill="#a3a3a3" />
                <rect x="8" y="7" width="11" height="5" fill="#fff" />
                <rect x="3" y="19" width="22" height="5" fill="#a3a3a3" />
              </svg>
            </div>
            <svg viewBox="0 0 30 26" className="w-[30px] h-[26px] ml-[20px] shrink-0">
              <rect x="0" y="0" width="13" height="11" rx="2" fill="#666" />
              <rect x="17" y="0" width="13" height="11" rx="2" fill="#666" />
              <rect x="0" y="15" width="13" height="11" rx="2" fill="#666" />
              <rect x="17" y="15" width="13" height="11" rx="2" fill="#666" />
            </svg>
            <svg viewBox="0 0 30 26" className="w-[30px] h-[26px] ml-[42px] shrink-0">
              <rect x="0" y="0" width="30" height="4" fill="#666" />
              <rect x="3" y="3" width="24" height="18" fill="none" stroke="#666" strokeWidth="2" />
              <path d="M9 10 H21 M15 21 V25 M10 25 H20" stroke="#666" strokeWidth="2" />
            </svg>
            <div className="ml-[36px] w-[16px] h-[4px] bg-[#666] shrink-0" />
            <div className="ml-[16px] relative w-[196px] h-[14px] rounded-full bg-[#9c9c9c] shrink-0">
              <div className="absolute left-[93px] -top-[5px] w-[22px] h-[24px] rounded-full bg-white border border-[#9a9a9a]" />
            </div>
            <svg viewBox="0 0 16 16" className="w-[16px] h-[16px] ml-[16px] shrink-0">
              <path d="M8 0 V16 M0 8 H16" stroke="#666" strokeWidth="3" />
            </svg>
            <span className="ml-[34px] w-[58px] text-[23px]">121%</span>
            <svg viewBox="0 0 26 32" className="w-[26px] h-[32px] ml-[40px] shrink-0">
              <rect x="1" y="1" width="24" height="30" fill="none" stroke="#666" strokeWidth="2" />
              <path d="M13 6 V12 M10 9 L13 6 L16 9 M13 20 V26 M10 23 L13 26 L16 23 M6 16 H10 M16 16 H20" fill="none" stroke="#666" strokeWidth="1.5" />
            </svg>
          </div>
        </div>
      </div>
    </div>
  );
}
